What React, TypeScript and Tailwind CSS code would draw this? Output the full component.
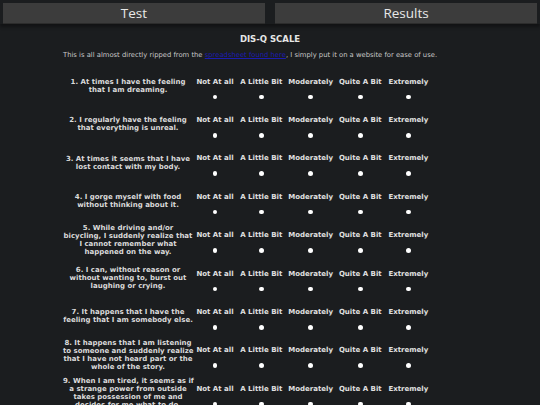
import React from 'react';

const options = ['Not At all', 'A Little Bit', 'Moderately', 'Quite A Bit', 'Extremely'];

const questions: string[][] = [
  ['1. At times I have the feeling', 'that I am dreaming.'],
  ['2. I regularly have the feeling', 'that everything is unreal.'],
  ['3. At times it seems that I have', 'lost contact with my body.'],
  ['4. I gorge myself with food', 'without thinking about it.'],
  ['5. While driving and/or', 'bicycling, I suddenly realize that', 'I cannot remember what', 'happened on the way.'],
  ['6. I can, without reason or', 'without wanting to, burst out', 'laughing or crying.'],
  ['7. It happens that I have the', 'feeling that I am somebody else.'],
  ['8. It happens that I am listening', 'to someone and suddenly realize', 'that I have not heard part or the', 'whole of the story.'],
  ['9. When I am tired, it seems as if', 'a strange power from outside', 'takes possession of me and', 'decides for me what to do.'],
];

const App = () => {
  return (
    <div className="w-[540px] h-[405px] overflow-hidden bg-[#1b1d1f] text-[#dcdcdc] font-['DejaVu_Sans',sans-serif]">
      {/* tabs */}
      <div className="flex gap-[10.7px] px-[3.3px] pt-[3.3px] shadow-[0_3px_3px_rgba(0,0,0,0.35)]">
        <button className="flex-1 h-[21px] bg-[#3c3c3c] border-b border-[#2c2c2c] text-[#e8e8e8] text-[13.5px] leading-[20px] font-['Open_Sans',sans-serif]">
          Test
        </button>
        <button className="flex-1 h-[21px] bg-[#3c3c3c] border-b border-[#2c2c2c] text-[#e8e8e8] text-[13.5px] leading-[20px] font-['Open_Sans',sans-serif]">
          Results
        </button>
      </div>

      <h1 className="mt-[10px] text-center text-[8.5px] leading-[10px] font-bold text-[#e6e6e6]">DIS-Q SCALE</h1>

      <p className="mt-[6.7px] pl-[63px] text-[6.8px] leading-[8px] text-[#c8c8c8] whitespace-nowrap">
        This is all almost directly ripped from the{' '}
        <a href="#" className="text-[#1c1cb0] underline">spreadsheet found here</a>, I simply put it on a website for ease of use.
      </p>

      <div className="mt-[7.8px] ml-[63px] grid grid-cols-[130px_44px_48.5px_50.3px_49px_47.2px] auto-rows-[38.4px] items-center">
        {questions.map((lines, qi) => (
          <React.Fragment key={qi}>
            <div className="text-center text-[7px] leading-[8px] font-bold text-[#dadada]">
              {lines.map((l, li) => (
                <div key={li} className="whitespace-nowrap">{l}</div>
              ))}
            </div>
            {options.map((o, oi) => (
              <label key={oi} className="flex flex-col items-center mb-[-5px] text-[7px] leading-[8px] font-bold text-[#e0e0e0]">
                <span className="whitespace-nowrap">{o}</span>
                <input
                  type="radio"
                  name={`q${qi}`}
                  className="appearance-none mt-[9px] w-[4.6px] h-[4.6px] rounded-full bg-white"
                />
              </label>
            ))}
          </React.Fragment>
        ))}
      </div>
    </div>
  );
};

export default App;
